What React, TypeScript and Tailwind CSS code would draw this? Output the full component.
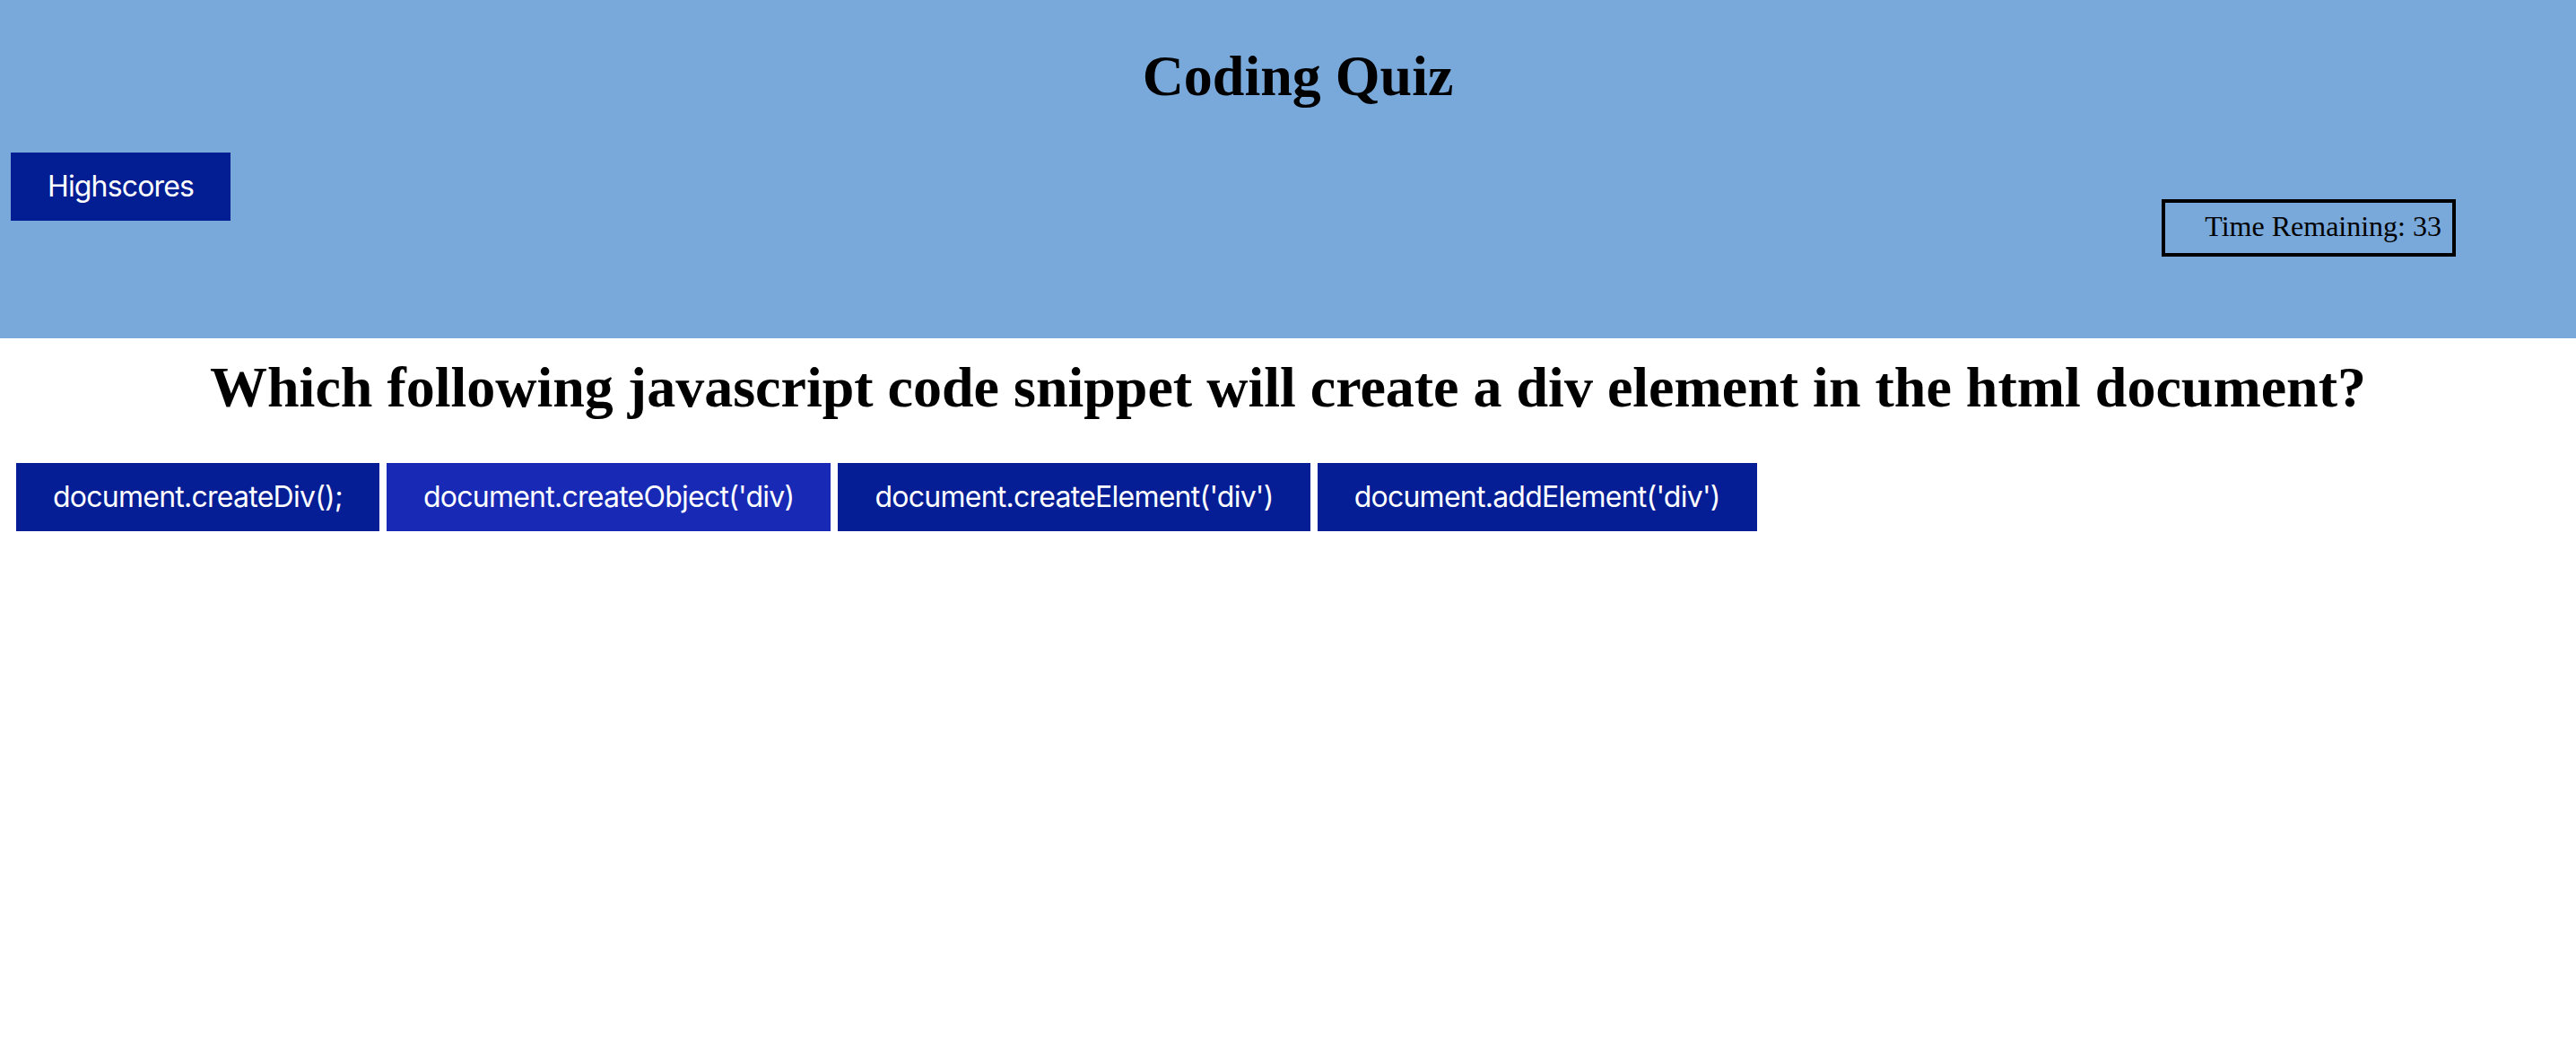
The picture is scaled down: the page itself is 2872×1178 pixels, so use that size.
import React from "react";

const serif = { fontFamily: '"Liberation Serif", "Times New Roman", serif' };

const answers = [
  { label: "document.createDiv();", active: false },
  { label: "document.createObject('div)", active: true },
  { label: "document.createElement('div')", active: false },
  { label: "document.addElement('div')", active: false },
];

export default function App() {
  return (
    <div className="w-full min-h-[1178px] bg-white text-black">
      <header className="h-[377px] bg-[#79a9da] flex flex-col">
        <h1
          className="pt-[48px] pl-[22px] text-center text-[64px] leading-[74px] font-bold"
          style={serif}
        >
          Coding Quiz
        </h1>
        <div className="flex items-start justify-between pl-[12px] pr-[134px] mt-[48px]">
          <button className="bg-[#031d93] text-white px-[41px] py-[20px] text-[32px] leading-[36px] tracking-[-0.85px] font-['Inter',sans-serif]">
            Highscores
          </button>
          <div
            className="mt-[52px] w-[328px] border-[4px] border-black pt-[8px] pb-[12px] pr-[12px] text-right text-[32px] leading-[36px]"
            style={serif}
          >
            Time Remaining: 33
          </div>
        </div>
      </header>
      <main>
        <h2
          className="mt-[18px] text-center text-[64px] leading-[74px] font-bold"
          style={serif}
        >
          Which following javascript code snippet will create a div element in the html document?
        </h2>
        <div className="mt-[47px] flex gap-[8px] pl-[18px]">
          {answers.map((a) => (
            <button
              key={a.label}
              className={
                "text-white px-[41px] py-[20px] text-[32px] leading-[36px] tracking-[-0.75px] font-['Inter',sans-serif] " +
                (a.active ? "bg-[#1729b5]" : "bg-[#051d95]")
              }
            >
              {a.label}
            </button>
          ))}
        </div>
      </main>
    </div>
  );
}
